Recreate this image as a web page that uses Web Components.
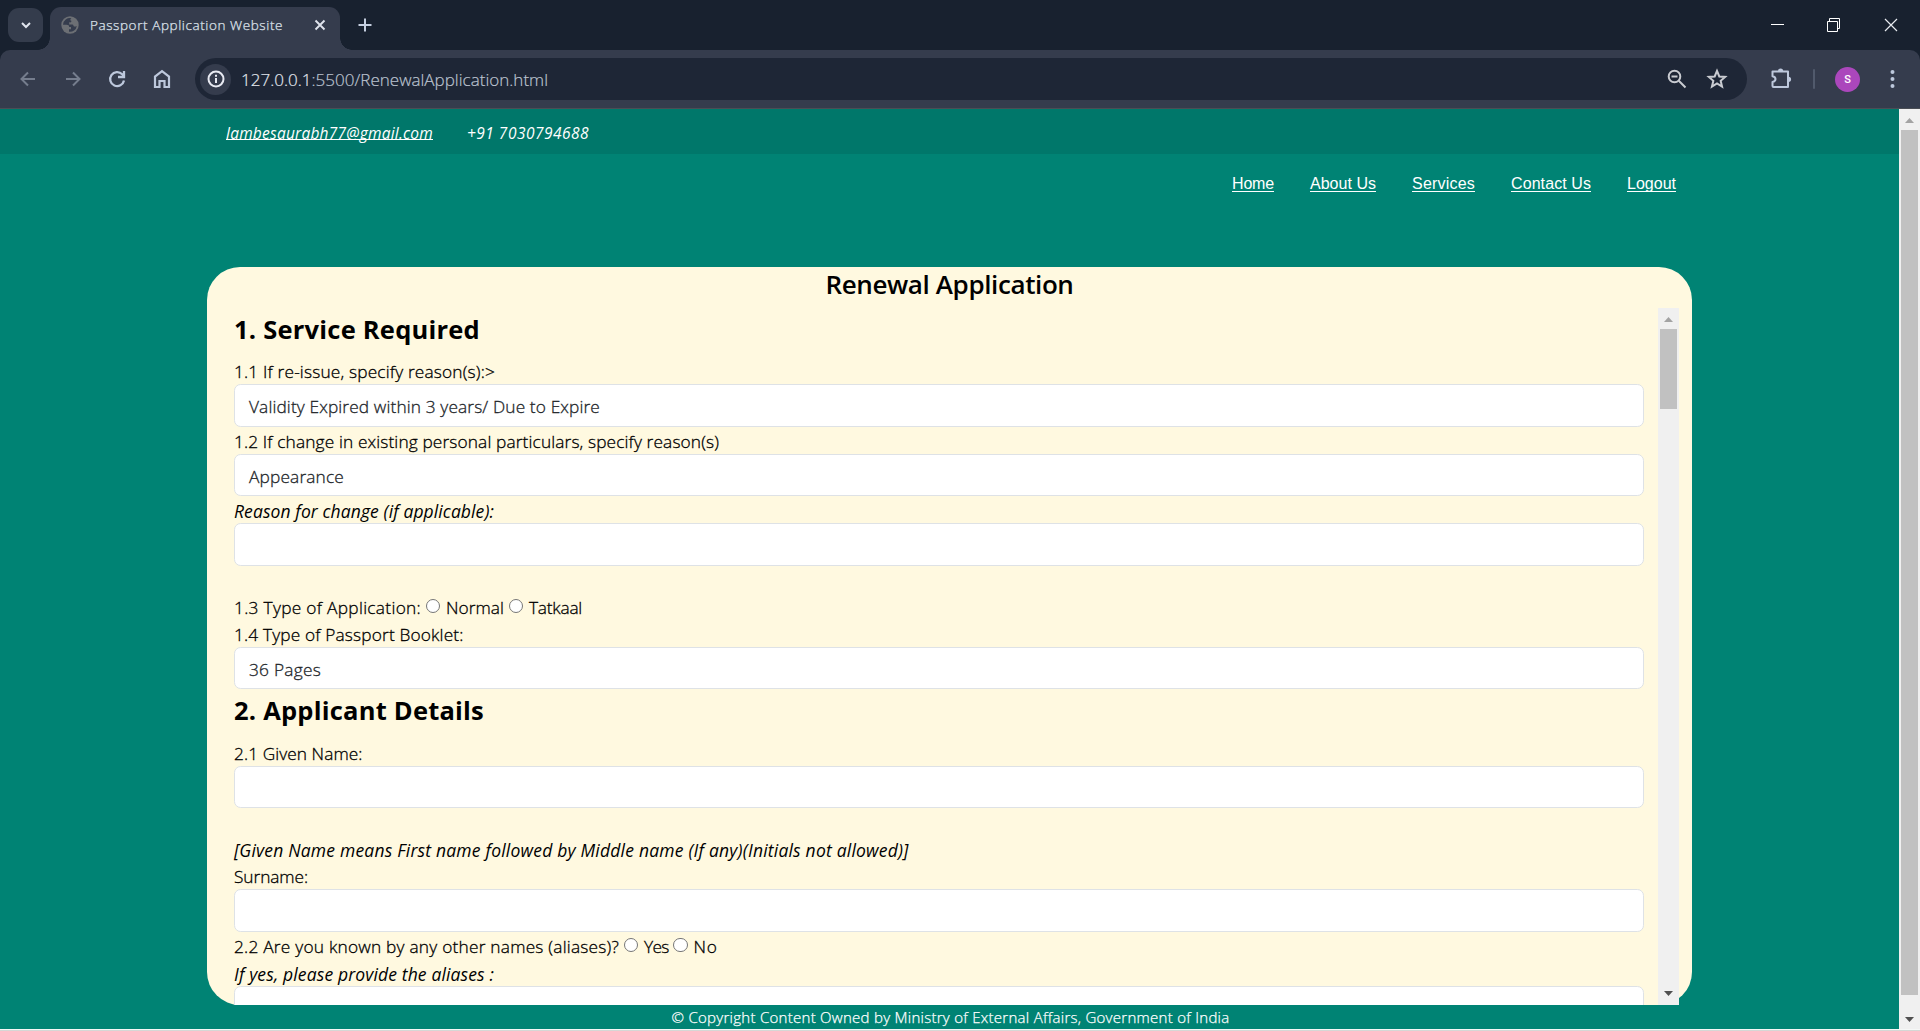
<!DOCTYPE html>
<html lang="en">
<head>
<meta charset="utf-8">
<title>Passport Application Website</title>
<style>
html,body{margin:0;height:100%;overflow:hidden}
body{font-family:"Open Sans","Noto Sans",sans-serif;color:#000}
</style>
</head>
<body>
<browser-window>
  <tab-strip slot="tabs"><fit-text w="193">Passport Application Website</fit-text></tab-strip>
  <tool-bar slot="toolbar"><fit-text w="307"><span style="color:#e3e6ee">127.0.0.1</span>:5500/RenewalApplication.html</fit-text></tool-bar>
  <passport-page slot="page">
    <contact-bar slot="contact"></contact-bar>
    <site-nav slot="nav"></site-nav>
    <form-card slot="card">
      <fit-text slot="title" w="248">Renewal Application</fit-text>
      <section-title><fit-text w="246">1. Service Required</fit-text></section-title>
      <form-label><fit-text w="261">1.1 If re-issue, specify reason(s):&gt;</fit-text></form-label>
      <text-field h="43"><fit-text w="351">Validity Expired within 3 years/ Due to Expire</fit-text></text-field>
      <form-label><fit-text w="485">1.2 If change in existing personal particulars, specify reason(s)</fit-text></form-label>
      <text-field h="42"><fit-text w="95">Appearance</fit-text></text-field>
      <form-label italic><fit-text w="260">Reason for change (if applicable):</fit-text></form-label>
      <text-field h="43"></text-field>
      <form-gap></form-gap>
      <form-label><fit-text w="187">1.3 Type of Application:</fit-text><radio-dot></radio-dot><fit-text w="58">Normal</fit-text><radio-dot></radio-dot><fit-text w="53">Tatkaal</fit-text></form-label>
      <form-label><fit-text w="229.500">1.4 Type of Passport Booklet:</fit-text></form-label>
      <text-field h="42"><fit-text w="72">36 Pages</fit-text></text-field>
      <section-title tall><fit-text w="250">2. Applicant Details</fit-text></section-title>
      <form-label><fit-text w="128.500">2.1 Given Name:</fit-text></form-label>
      <text-field h="42"></text-field>
      <form-gap></form-gap>
      <form-label italic><fit-text w="674.500">[Given Name means First name followed by Middle name (If any)(Initials not allowed)]</fit-text></form-label>
      <form-label><fit-text w="74">Surname:</fit-text></form-label>
      <text-field h="43"></text-field>
      <form-label><fit-text w="385">2.2 Are you known by any other names (aliases)?</fit-text><radio-dot></radio-dot><fit-text w="24.500">Yes</fit-text><radio-dot></radio-dot><fit-text w="24">No</fit-text></form-label>
      <form-label italic><fit-text w="260">If yes, please provide the aliases :</fit-text></form-label>
      <text-field h="42"></text-field>
    </form-card>
    <fit-text slot="footer" w="558">© Copyright Content Owned by Ministry of External Affairs, Government of India</fit-text>
  </passport-page>
</browser-window>
<script>
function component(name, html, setup) {
  customElements.define(name, class extends HTMLElement {
    constructor() {
      super();
      this.attachShadow({mode: 'open'}).innerHTML = html;
    }
    connectedCallback() { if (setup) setup(this, this.shadowRoot); }
  });
}

component('browser-window', `<style>
:host{display:flex;flex-direction:column;width:1920px;height:1031px;background:#18212f;overflow:hidden}
.main{flex:1;display:flex;min-height:0;border-top:1px solid #4a4e55;background:#008374}
.base{height:2px;background:#d5d7d5;border-top:1px solid #f6f8f7;box-sizing:border-box}
scroll-bar{--arrow-drop:-2px}
</style><slot name="tabs"></slot><slot name="toolbar"></slot>
<div class="main"><slot name="page"></slot><scroll-bar thumb="865"></scroll-bar></div><div class="base"></div>`);

component('tab-strip', `<style>
:host{display:flex;height:50px;align-items:flex-end;background:#18212f;color:#dfe3ec;font-size:13.5px;flex:none}
.search{margin:0 7px 8px 8px;width:35px;height:34px;border-radius:11px;background:#343c4c;display:flex;align-items:center;justify-content:center}
.tab{position:relative;width:290px;height:43px;background:#353c4d;border-radius:11px 11px 0 0;display:flex;align-items:center;box-sizing:border-box;padding:0 14px 7px 11px}
.tab:before,.tab:after{content:"";position:absolute;bottom:0;width:12px;height:12px}
.tab:before{left:-12px;background:radial-gradient(circle at 0 0,transparent 11.5px,#353c4d 12px)}
.tab:after{right:-12px;background:radial-gradient(circle at 100% 0,transparent 11.5px,#353c4d 12px)}
.title{margin-left:11px;flex:1;line-height:20px;font-weight:300;-webkit-text-stroke:.25px}
.plus{margin:0 0 18px 18px}
.win{margin-left:auto;display:flex;gap:43px;padding:0 22px 18px 0}
.win svg:last-child{margin-left:1px}
svg{display:block}
</style>
<div class="search"><svg width="12" height="12" fill="none" stroke="#e1e5ee" stroke-width="2"><path d="M2 4l4 4 4-4"/></svg></div>
<div class="tab"><svg width="18" height="18" viewBox="0 0 18 18"><circle cx="9" cy="9" r="8.7" fill="#6c6f74"/><path d="M10.5 2.2A7 7 0 0 0 2 8.7c1.3.2 2.6.1 3.6.1 1.8 0 2.6.9 2.600 2.2H10v2.3H8v2.5a7 7 0 0 0 7.8-5.9c-.7.6-1.8.9-2.8.6-.6-.9-.7-1.9-1.5-2.1H8.2V6.3c1.7.3 2.2-.2 2.2-1.2 0-.7-1.1-.5-1.1-1.2 0-.8.6-1.4 1.2-1.7z" fill="#353c4d"/></svg>
<div class="title"><slot></slot></div>
<svg width="12" height="12" fill="none" stroke="#dfe3ec" stroke-width="1.9"><path d="M1.5 1.5l9 9m0-9l-9 9"/></svg></div>
<svg class="plus" width="14" height="14" fill="none" stroke="#c5cfe0" stroke-width="2"><path d="M7 .5v13M.5 7h13"/></svg>
<div class="win">
<svg width="13" height="14"><path d="M0 6.5h13" stroke="#fff"/></svg>
<svg width="13" height="14" fill="none" stroke="#fff"><path d="M.5 3.500h10v10H.5zM2.500 3.500v-3h10v10h-2"/></svg>
<svg width="14" height="14" fill="none" stroke="#e8ebf0" stroke-width="1.2"><path d="M1 1l12 12M13 1L1 13"/></svg>
</div>`);

component('tool-bar', `<style>
:host{display:flex;height:58px;flex:none;align-items:center;background:#353c4d;border-radius:10px 10px 0 0;padding:0 20px 0 17px;box-sizing:border-box}
svg{display:block;flex:none;fill:none;stroke:#bdc8dc;stroke-width:2}
.nav{display:flex;gap:22.700px;width:178px}
.dim{stroke:#757d8d}
.box{width:1552px;flex:none;height:42px;border-radius:21px;background:#1e2636;display:flex;align-items:center;box-sizing:border-box;padding:0 19px 0 5px}
.info{width:31px;height:31px;border-radius:50%;background:#353c4d;display:flex;align-items:center;justify-content:center;margin-right:10px}
.url{flex:1;color:#bcc3d0;font-size:17px;line-height:22px;font-weight:300;padding-top:2px;-webkit-text-stroke:.2px}
.tools{display:flex;gap:18px}
.tools svg,.info svg{stroke:#c9cbd1}
.info svg{stroke:#e8eaf2}
.ext{margin-left:22px}
.sep{width:2px;height:20px;background:#515a6c;border-radius:1px;margin-left:20px}
.avatar{width:25px;height:25px;border-radius:50%;background:#ab47bc;color:#fff;font:500 11px/25px Roboto,sans-serif;text-align:center;margin-left:20px}
.menu{margin-left:30px;fill:#bdc8dc;stroke:none}
</style>
<div class="nav">
<svg class="dim" width="22" height="22"><path d="M18 11H5M11 4.5L4.5 11l6.500 6.500"/></svg>
<svg class="dim" width="22" height="22"><path d="M4 11h13M11 4.500l6.500 6.500-6.500 6.500"/></svg>
<svg width="22" height="22"><path d="M18 12.500A7 7 0 1 1 16.200 6.200l1.500 1.500M18 3v6h-6" stroke-width="2.300"/></svg>
<svg width="22" height="22"><path d="M4 19V8.500L11 3.200l7 5.300V19h-4.500v-6h-5v6z" stroke-width="2.200"/></svg>
</div>
<div class="box"><div class="info"><svg width="18" height="18"><circle cx="9" cy="9" r="7.500"/><path d="M9 8v5M9 4.800v2"/></svg></div>
<div class="url"><slot></slot></div>
<div class="tools">
<svg width="22" height="22"><circle cx="8.500" cy="8.500" r="5.800"/><path d="M5.500 8.500h6M12.800 12.800l6.700 6.700"/></svg>
<svg width="22" height="22" viewBox="0 0 24 24"><path d="M12 3.200l2.500 6 6.400.5-4.900 4.200 1.500 6.300-5.500-3.400-5.500 3.400L8 13.900 3.100 9.700l6.400-.5z" stroke-width="2.200"/></svg>
</div></div>
<svg class="ext" width="24" height="24"><path d="M3.500 4.500h15.500v15.500H4.500q-1 0-1-1v-4q3-.5 3-2.900t-3-2.900z" stroke-linejoin="round"/><path d="M9 4a2.600 2.600 0 0 1 5.200 0zM19.500 9.700a2.600 2.600 0 0 1 0 5.200z" fill="#bdc8dc" stroke="none"/></svg>
<div class="sep"></div><div class="avatar">S</div>
<svg class="menu" width="5" height="20"><circle cx="2.500" cy="3" r="2"/><circle cx="2.500" cy="10" r="2"/><circle cx="2.500" cy="17" r="2"/></svg>`);

component('scroll-bar', `<style>
:host{display:flex;flex-direction:column;width:21px;flex:none;background:#f0f0f0;align-items:center}
.thumb{width:17px;background:#c1c1c1;margin-top:21px;flex:none}
svg{display:block;flex:none}
.up{height:21px;margin-bottom:-21px}
.down{margin-top:auto;margin-bottom:var(--arrow-drop,0)}
</style><svg class="up" width="21" height="21"><path d="M6 14h9L10.500 9z" fill="#a3a3a3"/></svg><div class="thumb"></div><svg class="down" width="21" height="21"><path d="M6 7h9l-4.500 5z" fill="#505050"/></svg>`,
(el, root) => { root.querySelector('.thumb').style.height = el.getAttribute('thumb') + 'px'; });

component('passport-page', `<style>
:host{display:flex;flex-direction:column;flex:1;background:#008374;align-items:center}
.spacer{height:113px;width:100%}
.foot{color:#fff;font-size:15px;font-weight:300;line-height:24px;padding-left:2px;-webkit-text-stroke:.25px}
</style><slot name="contact"></slot><div class="spacer"><slot name="nav"></slot></div><slot name="card"></slot><div class="foot"><slot name="footer"></slot></div>`);

component('contact-bar', `<style>
:host{display:flex;gap:34px;width:100%;height:45px;box-sizing:border-box;padding:12px 0 0 226px;background:#00776a;color:#fff;font-size:15.500px;line-height:24px;font-style:italic}
a{color:inherit;text-decoration:none;border-bottom:1px solid #fff;height:18px}
</style><a href="#"><fit-text w="207">lambesaurabh77@gmail.com</fit-text></a><fit-text w="122">+91 7030794688</fit-text>`);

component('site-nav', `<style>
:host{display:flex;justify-content:flex-end;gap:36px;padding:19px 223px 0 0;font:16px/22px "Liberation Sans",Arial,sans-serif;color:#fff}
a{color:inherit;text-decoration:none;border-bottom:1px solid #fff;height:18px}
</style><a href="#"><fit-text w="42">Home</fit-text></a><a href="#"><fit-text w="66">About Us</fit-text></a><a href="#"><fit-text w="63">Services</fit-text></a><a href="#"><fit-text w="80">Contact Us</fit-text></a><a href="#"><fit-text w="49">Logout</fit-text></a>`);

component('form-card', `<style>
:host{display:flex;flex-direction:column;width:1485px;height:738px;flex:none;background:#fff9e0;border-radius:33px}
.title{height:41px;text-align:center;font-size:26px;font-weight:600;line-height:35px;flex:none}
.scroll{display:flex;height:697px;overflow:hidden;margin-right:13px;padding-left:27px}
.list{flex:1;display:flex;flex-direction:column;margin-right:14px}
scroll-bar{--arrow-drop:0px}
</style><div class="title"><slot name="title"></slot></div><div class="scroll"><div class="list"><slot></slot></div><scroll-bar thumb="80"></scroll-bar></div>`);

component('section-title', `<style>
:host{display:block;height:49px;flex:none;font-size:25.500px;font-weight:700;line-height:43px;box-sizing:border-box}
:host([tall]){height:50px}
</style><slot></slot>`);

component('form-label', `<style>
:host{display:flex;height:27px;flex:none;align-items:flex-end;font-size:17.300px;line-height:25px;font-weight:300;-webkit-text-stroke:.3px}
:host([italic]){font-style:italic;font-weight:400;font-size:17.500px;line-height:24px;-webkit-text-stroke:0}
</style><slot></slot>`);

component('form-gap', `<style>:host{display:block;height:27px;flex:none}</style>`);

component('text-field', `<style>
:host{display:block;flex:none;box-sizing:border-box;background:#fff;border:1px solid #dee2e6;border-radius:6.600px;padding:9px 14px 0;font-size:17.300px;line-height:26px;color:#212529;font-weight:300;-webkit-text-stroke:.3px}
</style><slot></slot>`, el => { el.style.height = el.getAttribute('h') + 'px'; });

component('radio-dot', `<style>
:host{display:block;width:12.500px;height:12.500px;border:1px solid #767676;border-radius:50%;background:#fff;margin:0 6px 7px 4.500px;flex:none}
</style>`);

/* Single-line text spaced to an exact run width, given in pixels by the w attribute. */
component('fit-text', `<style>
:host{display:inline-block;white-space:nowrap;vertical-align:top}
span{display:inline-block}
</style><span><slot></slot></span>`, (el, root) => {
  const width = parseFloat(el.getAttribute('w'));
  const count = el.textContent.length;
  const natural = root.querySelector('span').getBoundingClientRect().width;
  root.querySelector('span').style.letterSpacing = (width - natural) / count + 'px';
  el.style.width = width + 'px';
});
</script>
</body>
</html>
